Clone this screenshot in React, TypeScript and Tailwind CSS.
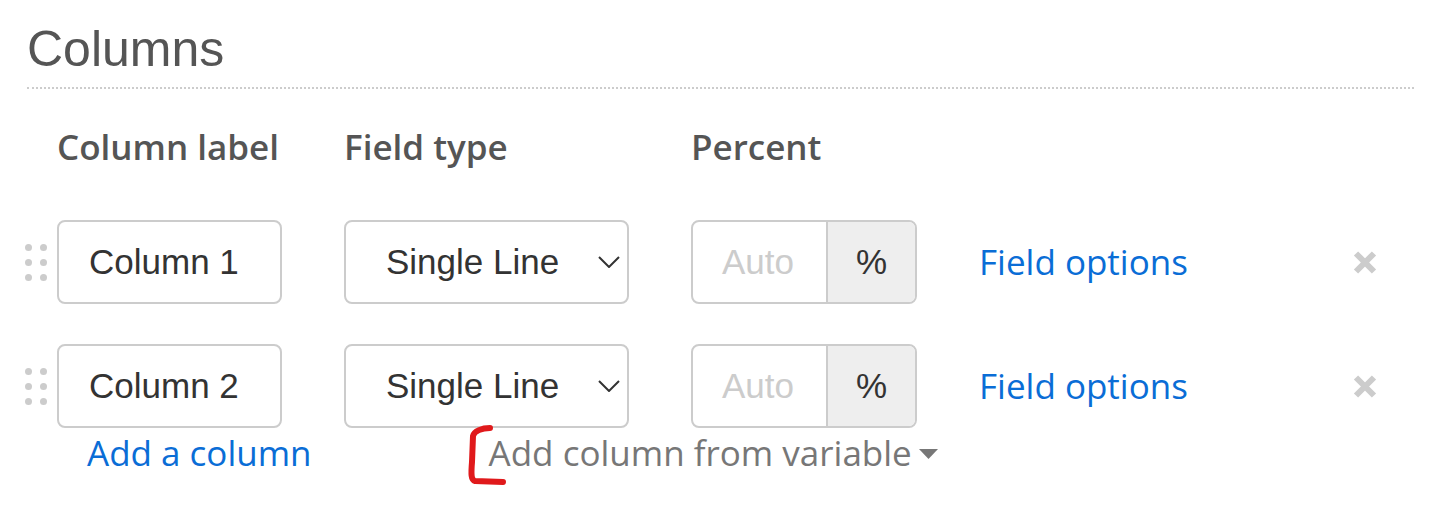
import React from "react";

const ARIAL = { fontFamily: '"Liberation Sans", Arial, sans-serif' };

function Handle() {
  return (
    <div className="w-[32px] -ml-[2px] h-full flex items-center">
      <div className="grid grid-cols-2 gap-x-[8px] gap-y-[8px]">
        {[0, 1, 2, 3, 4, 5].map((i) => (
          <span key={i} className="block w-[7px] h-[7px] rounded-full bg-[#cccccc]" />
        ))}
      </div>
    </div>
  );
}

function Row({ label }: { label: string }) {
  return (
    <div className="flex items-center h-[84px]">
      <Handle />
      <div
        className="w-[225px] h-[84px] border-2 border-[#cccccc] rounded-[8px] pl-[30px] flex items-center text-[35px] text-[#333333]"
        style={ARIAL}
      >
        {label}
      </div>
      <div
        className="ml-[62px] w-[285px] h-[84px] border-2 border-[#cccccc] rounded-[8px] pl-[40px] pr-[7px] flex items-center text-[35px] text-[#333333]"
        style={ARIAL}
      >
        <span>Single Line</span>
        <svg className="ml-auto" width="22" height="12" viewBox="0 0 22 12" fill="none">
          <path d="M1 1 L11 11 L21 1" stroke="#333" strokeWidth="2" />
        </svg>
      </div>
      <div
        className="ml-[62px] w-[226px] h-[84px] border-2 border-[#cccccc] rounded-[8px] overflow-hidden flex text-[35px]"
        style={ARIAL}
      >
        <div className="w-[133px] flex items-center pl-[29px] text-[#cccccc]">Auto</div>
        <div className="flex-1 border-l-2 border-[#cccccc] bg-[#eeeeee] flex items-center justify-center text-[#333333]">
          %
        </div>
      </div>
      <a className="ml-[62px] text-[35px] text-[#0a6dd6] leading-[48px]">Field options</a>
      <svg className="ml-auto mr-[37px]" width="24" height="23" viewBox="0 0 24 23">
        <path d="M3 2.5 L21 20.5 M21 2.5 L3 20.5" stroke="#cccccc" strokeWidth="6" strokeLinecap="butt" />
      </svg>
    </div>
  );
}

export default function App() {
  return (
    <div
      className="w-[1447px] h-[522px] bg-white pt-[21px] pl-[27px] pr-[33px]"
      style={{ fontFamily: '"Open Sans", "Noto Sans", sans-serif' }}
    >
      <h2 className="text-[50px] leading-[56px] text-[#555555] font-normal" style={ARIAL}>
        Columns
      </h2>
      <div className="mt-[10px] border-t-2 border-dotted border-[#cccccc]" />
      <div className="mt-[35px] flex pl-[30px] text-[35px] font-semibold text-[#555555] leading-[46px]">
        <div className="w-[287px]">Column label</div>
        <div className="w-[347px]">Field type</div>
        <div>Percent</div>
      </div>
      <div className="mt-[50px] flex flex-col gap-[40px]">
        <Row label="Column 1" />
        <Row label="Column 2" />
      </div>
      <div className="mt-[1px] flex items-center text-[35px] leading-[48px]">
        <a className="ml-[60px] text-[#0a6dd6]">Add a column</a>
        <span className="relative ml-[177px] text-[#777777] flex items-center">
          Add column from variable
          <svg className="ml-[7px] mt-[2px]" width="19" height="10" viewBox="0 0 19 10">
            <path d="M0 0 L19 0 L9.5 10 Z" fill="#777777" />
          </svg>
          <svg
            className="absolute left-[-27px] top-[-7px]"
            width="50"
            height="70"
            viewBox="0 0 50 70"
            fill="none"
          >
            <path
              d="M28 6 C20 6 12 9 11 14 L10 40 C9 52 9 58 13 59 L41 60"
              stroke="#e0191b"
              strokeWidth="6"
              strokeLinecap="round"
              strokeLinejoin="round"
            />
          </svg>
        </span>
      </div>
    </div>
  );
}
